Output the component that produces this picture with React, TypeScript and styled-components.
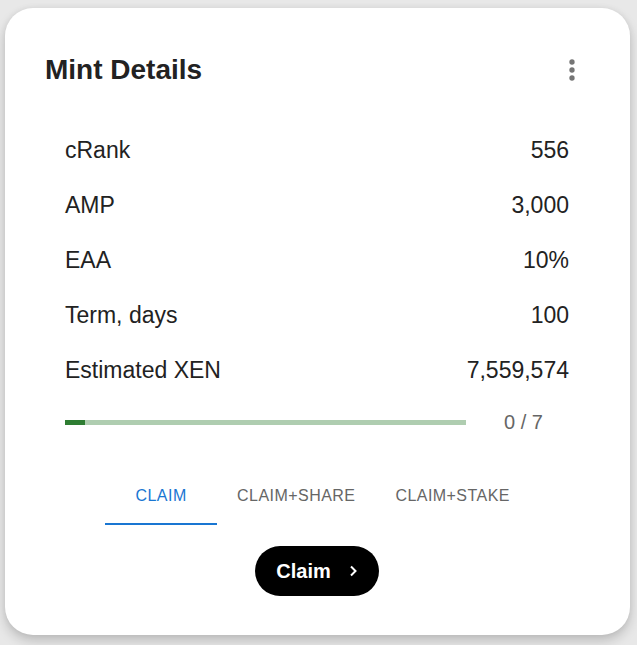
import styled, { createGlobalStyle } from "styled-components";

const GlobalStyle = createGlobalStyle`
  html, body {
    margin: 0;
    padding: 0;
    background-color: #e8e8e8;
    font-family: "Liberation Sans", Arial, sans-serif;
  }
  #root {
    padding: 8px 7px 10px 5px;
  }
`;

const Card = styled.div`
  width: 625px;
  height: 627px;
  box-sizing: border-box;
  background-color: #ffffff;
  border-radius: 28px;
  box-shadow: 0 6px 12px rgba(0, 0, 0, 0.18), 0 0 6px rgba(0, 0, 0, 0.06);
  padding: 46px 42px 39px 40px;
  display: flex;
  flex-direction: column;
`;

const Header = styled.div`
  display: flex;
  justify-content: space-between;
  align-items: center;
  height: 32px;
`;

const Title = styled.h2`
  margin: 0;
  font-size: 28px;
  font-weight: 700;
  color: #222222;
  line-height: 32px;
`;

const MenuButton = styled.button`
  width: 32px;
  height: 32px;
  padding: 0;
  border: none;
  background: none;
  display: flex;
  align-items: center;
  justify-content: center;
  cursor: pointer;
`;

const Details = styled.div`
  margin: 37px 19px 0 20px;
  display: flex;
  flex-direction: column;
`;

const Row = styled.div`
  height: 55px;
  display: flex;
  justify-content: space-between;
  align-items: center;
  font-size: 23px;
  color: #222222;
`;

const ProgressRow = styled.div`
  margin-top: 12px;
  height: 24px;
  display: flex;
  align-items: center;
  gap: 38px;
`;

const Track = styled.div`
  flex: 1;
  height: 5px;
  background-color: #afcdb0;
  overflow: hidden;
`;

const Fill = styled.div`
  height: 100%;
  background-color: #2e7d32;
`;

const ProgressLabel = styled.span`
  width: 65px;
  font-size: 20px;
  color: #666666;
`;

const Tabs = styled.div`
  margin-top: 38px;
  display: flex;
  justify-content: center;
  padding-left: 2px;
`;

const Tab = styled.button<{ $active?: boolean }>`
  min-width: 112px;
  padding: 12px 20px 15px;
  border: none;
  background: none;
  font-family: "Liberation Sans", Arial, sans-serif;
  font-size: 16px;
  line-height: 24px;
  letter-spacing: 0.45px;
  text-transform: uppercase;
  color: ${(p) => (p.$active ? "#1976d2" : "#666666")};
  border-bottom: 2px solid ${(p) => (p.$active ? "#1976d2" : "transparent")};
  cursor: pointer;
`;

const Actions = styled.div`
  margin-top: 21px;
  display: flex;
  justify-content: center;
`;

const ClaimButton = styled.button`
  width: 124px;
  height: 50px;
  border: none;
  border-radius: 25px;
  background-color: #000000;
  color: #ffffff;
  font-family: "Liberation Sans", Arial, sans-serif;
  font-size: 20px;
  font-weight: 700;
  display: flex;
  align-items: center;
  justify-content: center;
  gap: 18px;
  padding: 0;
  cursor: pointer;
`;

const details = [
  { label: "cRank", value: "556" },
  { label: "AMP", value: "3,000" },
  { label: "EAA", value: "10%" },
  { label: "Term, days", value: "100" },
  { label: "Estimated XEN", value: "7,559,574" },
];

const tabs = ["Claim", "Claim+Share", "Claim+Stake"];

function MoreIcon() {
  return (
    <svg width="32" height="32" viewBox="0 0 24 24" fill="#757575">
      <circle cx="12" cy="6" r="2" />
      <circle cx="12" cy="12" r="2" />
      <circle cx="12" cy="18" r="2" />
    </svg>
  );
}

function ChevronIcon() {
  return (
    <svg width="8" height="12" viewBox="0 0 8 12" fill="none">
      <path d="M2 1.5l4.5 4.5-4.5 4.5" stroke="#ffffff" strokeWidth="2" />
    </svg>
  );
}

function App() {
  const progress = 5;
  return (
    <>
      <GlobalStyle />
      <Card>
        <Header>
          <Title>Mint Details</Title>
          <MenuButton aria-label="more">
            <MoreIcon />
          </MenuButton>
        </Header>
        <Details>
          {details.map((d) => (
            <Row key={d.label}>
              <span>{d.label}</span>
              <span>{d.value}</span>
            </Row>
          ))}
          <ProgressRow>
            <Track>
              <Fill style={{ width: `${progress}%` }} />
            </Track>
            <ProgressLabel>0 / 7</ProgressLabel>
          </ProgressRow>
        </Details>
        <Tabs>
          {tabs.map((t, i) => (
            <Tab key={t} $active={i === 0}>
              {t}
            </Tab>
          ))}
        </Tabs>
        <Actions>
          <ClaimButton>
            Claim
            <ChevronIcon />
          </ClaimButton>
        </Actions>
      </Card>
    </>
  );
}

export default App;
